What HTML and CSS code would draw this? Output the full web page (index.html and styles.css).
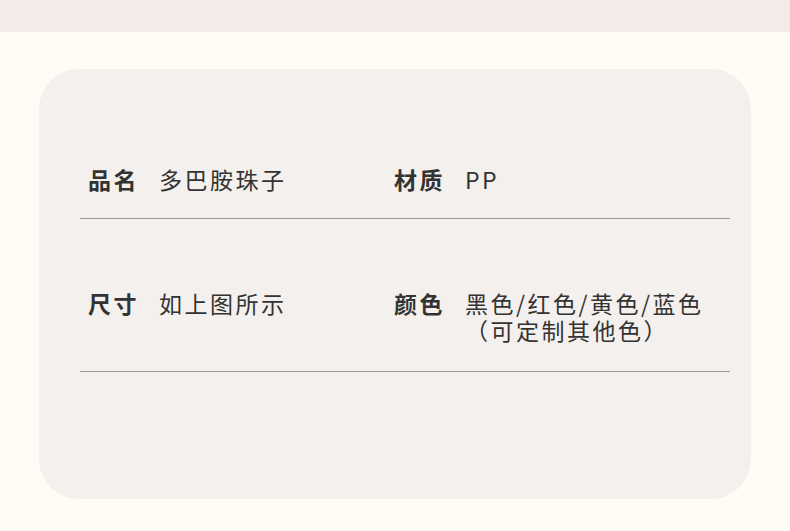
FILE: index.html
```html
<!DOCTYPE html>
<html lang="zh-CN">
<head>
<meta charset="utf-8">
<link rel="stylesheet" href="styles.css">
</head>
<body>
<div class="band"></div>
<div class="card">
  <div class="row row-first">
    <div class="item">
      <span class="label">品名</span>
      <span class="value">多巴胺珠子</span>
    </div>
    <div class="item">
      <span class="label">材质</span>
      <span class="value">PP</span>
    </div>
  </div>
  <div class="row row-second">
    <div class="item">
      <span class="label">尺寸</span>
      <span class="value">如上图所示</span>
    </div>
    <div class="item">
      <span class="label">颜色</span>
      <span class="value">黑色/红色/黄色/蓝色<br>（可定制其他色）</span>
    </div>
  </div>
</div>
</body>
</html>
```
FILE: styles.css
```css
html, body {
  margin: 0;
  padding: 0;
}
body {
  background: #fffbf5;
  width: 790px;
  height: 531px;
  overflow: hidden;
  font-family: "Noto Sans CJK SC", "Noto Sans", sans-serif;
  color: #353535;
}
.band {
  height: 32px;
  background: #f4eae8;
}
.card {
  margin: 37px 0 0 39px;
  width: 712px;
  height: 430px;
  box-sizing: border-box;
  border-radius: 40px;
  background: #f3f0ed;
  padding: 0 21px 0 41px;
}
.row {
  display: grid;
  grid-template-columns: 306px 1fr;
  padding-left: 8px;
  border-bottom: 1px solid #9a9794;
  font-size: 23px;
  line-height: 27px;
  letter-spacing: 2.5px;
}
.row-first {
  padding-top: 97px;
  padding-bottom: 25px;
}
.row-second {
  padding-top: 71px;
  padding-bottom: 27px;
}
.item {
  display: flex;
  align-items: flex-start;
}
.label {
  font-weight: 700;
  width: 71px;
  flex: none;
  color: #333;
}
.value {
  font-weight: 400;
  color: #333;
}
```
